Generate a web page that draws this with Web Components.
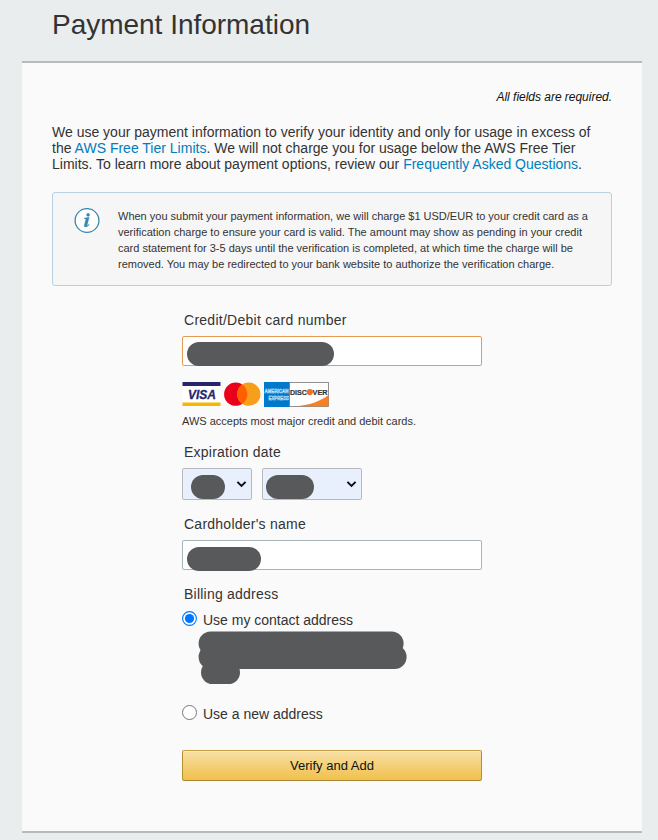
<!DOCTYPE html>
<html lang="en">
<head>
<meta charset="utf-8">
<title>Payment Information</title>
<style>
html,body{margin:0;background:#e9eded}
body{width:658px;height:840px;overflow:hidden;font-family:"Liberation Sans",Arial,sans-serif;color:#333}
</style>
</head>
<body>
<payment-page></payment-page>
<script>
const define = (name, html, setup) => customElements.define(name, class extends HTMLElement {
  connectedCallback() {
    if (this.shadowRoot) return;
    const t = document.createElement('template');
    t.innerHTML = html;
    this.attachShadow({mode: 'open'}).append(t.content.cloneNode(true));
    if (setup) setup(this, this.shadowRoot);
  }
});

// A single line of text whose tracking is adjusted to fill the width in "w".
define('text-line', `<style>
:host{display:block;white-space:nowrap}
span{display:inline-block}
::slotted(a){color:#007dbc;text-decoration:none}
</style><span><slot></slot></span>`, (host, root) => {
  const s = root.querySelector('span'), w = +host.getAttribute('w');
  const n = host.textContent.length;
  if (w) s.style.letterSpacing = ((w - s.getBoundingClientRect().width) / n).toFixed(4) + 'px';
});

// Rounded grey bar that hides a private value.
define('redaction-bar', `<style>
:host{display:block;box-sizing:border-box;background:#58595b;border-radius:12px;height:24px;flex:none}
</style>`);

define('info-note', `<style>
:host{box-sizing:border-box;display:flex;height:94px;border:1px solid #b7d1e0;border-radius:3px;background:#f6f6f6;padding:15px 0 0 20.5px;font-size:11px;line-height:16px}
svg{display:block;flex:none;margin-right:18.5px}
</style>
<svg width="26" height="26" viewBox="0 0 26 26"><circle cx="13" cy="12.5" r="11.9" fill="#fff" stroke="#3b86ae" stroke-width="1.3"/><g fill="#3b86ae" stroke="#3b86ae" stroke-width=".3"><circle cx="14.1" cy="6.8" r="1.6"/><path d="M10.3 10.1L15.2 9.3L13.2 17.1C13 17.9 13.7 17.6 14.8 16.2L15.3 16.6C13.7 18.8 12.2 19.3 11.1 19C10.2 18.7 10.1 17.9 10.4 16.8L11.8 11.5C12 10.8 11.5 10.7 10.2 10.7Z"/></g></svg>
<div><slot></slot></div>`);

define('text-field', `<style>
:host{box-sizing:border-box;display:block;width:300px;height:30px;border:1px solid var(--edge,#a6b6b8);border-radius:2px;background:#fff;padding:5px 0 0 4px}
</style><slot></slot>`);

define('select-field', `<style>
:host{box-sizing:border-box;display:flex;justify-content:space-between;height:32px;border:1px solid #b6b9bd;border-radius:2px;background:#e8f0fe;padding:6px 4px 0 var(--inset,7.5px)}
svg{display:block;margin-top:5px}
</style><slot></slot><svg width="11" height="8" viewBox="0 0 11 8"><path d="M1.4 1.9L5.5 5.9L9.6 1.9" fill="none" stroke="#101010" stroke-width="2"/></svg>`);

define('radio-option', `<style>
:host{display:flex;height:20px;font-size:14px;line-height:20px;gap:6px}
svg{display:block;flex:none}
.on{display:none}
:host([checked]) .on{display:block}
:host([checked]) .off{display:none}
</style>
<svg width="15" height="17" viewBox="0 0 15 17"><g class="off"><circle cx="7.5" cy="8.5" r="7" fill="#fff" stroke="#767676"/></g><g class="on"><circle cx="7.5" cy="8.5" r="6.9" fill="#fff" stroke="#0075ff" stroke-width="1.1"/><circle cx="7.5" cy="8.5" r="4.6" fill="#0075ff"/></g></svg><slot></slot>`);

define('card-brands', `<style>
:host{display:block;height:27px}svg{display:block}
text{font-family:"Liberation Sans",Arial,sans-serif;font-weight:bold}
</style>
<svg width="150" height="27" viewBox="0 0 150 27">
<rect x=".5" y="1" width="38" height="24" fill="#fff"/><rect x=".5" y="1" width="38" height="4" fill="#24266f"/><rect x=".5" y="21.5" width="38" height="3.5" fill="#f7b600"/>
<text x="6" y="17.8" font-size="13" font-style="italic" fill="#24266f" stroke="#24266f" stroke-width=".3" textLength="28" lengthAdjust="spacingAndGlyphs">VISA</text>
<circle cx="53.7" cy="13.2" r="11.6" fill="#eb001b"/><circle cx="66.8" cy="13.2" r="11.6" fill="#f79e1b"/>
<path d="M60.25 3.6A11.6 11.6 0 0 1 60.25 22.8A11.6 11.6 0 0 1 60.25 3.6Z" fill="#ff5f00"/>
<rect x="82" y="1" width="26" height="25" fill="#0079cd"/>
<g font-size="5.2" fill="#3c95d8" stroke="#d6ecfc" stroke-width=".4"><text x="82.5" y="12.4" textLength="24" lengthAdjust="spacingAndGlyphs">AMERICAN</text><text x="86.5" y="18.8" textLength="20.5" lengthAdjust="spacingAndGlyphs">EXPRESS</text></g>
<rect x="107.5" y="1.5" width="39" height="24" fill="#fff" stroke="#777" stroke-width=".8"/>
<path d="M115 25.2C128 24 139 20 146.5 14V25.2Z" fill="#f58025"/>
<g font-size="8" fill="#333" stroke="#333" stroke-width=".2"><text x="107.9" y="13.9" textLength="17" lengthAdjust="spacingAndGlyphs">DISC</text><text x="130.6" y="13.9" textLength="15" lengthAdjust="spacingAndGlyphs">VER</text></g><circle cx="127.8" cy="11.1" r="3.1" fill="#f36f21"/>
</svg>`);

define('primary-button', `<style>
:host{box-sizing:border-box;display:flex;align-items:center;justify-content:center;width:300px;height:31px;border:1px solid;border-color:#c6a040 #b5902f #a88734;border-radius:2px;background:linear-gradient(#f7dfa5,#f0c14b);box-shadow:inset 0 1px 0 #fae8bd;color:#111;font-size:13px}
</style><slot></slot>`);

define('payment-page', `<style>
:host{display:block;height:840px}
h1{margin:0 0 0 52px;font-size:28px;font-weight:400;line-height:50px;height:61px}
main{box-sizing:border-box;margin:0 16px 0 22px;height:772px;background:#fafafa;border:solid #bababa;border-width:2px 0;padding:26px 30px 0}
.req{display:flex;justify-content:flex-end;height:35px;font-size:12px;font-style:italic;line-height:16px;color:#111}
.intro{font-size:14px;line-height:16px;height:68px}
.form{width:300px;margin:24px auto 0;display:flex;flex-direction:column}
.label{font-size:14px;line-height:20px;padding-left:2px;height:26px}
.row{display:flex;gap:10px}
.address{display:block;height:54px;margin-left:16px}
</style>
<h1><text-line w="258">Payment Information</text-line></h1>
<main>
<div class="req"><text-line w="115.5">All fields are required.</text-line></div>
<div class="intro">
<text-line w="538.5">We use your payment information to verify your identity and only for usage in excess of</text-line>
<text-line w="523.5">the <a>AWS Free Tier Limits</a>. We will not charge you for usage below the AWS Free Tier</text-line>
<text-line w="530">Limits. To learn more about payment options, review our <a>Frequently Asked Questions</a>.</text-line>
</div>
<info-note>
<text-line w="470">When you submit your payment information, we will charge $1 USD/EUR to your credit card as a</text-line>
<text-line w="464">verification charge to ensure your card is valid. The amount may show as pending in your credit</text-line>
<text-line w="455">card statement for 3-5 days until the verification is completed, at which time the charge will be</text-line>
<text-line w="436.3">removed. You may be redirected to your bank website to authorize the verification charge.</text-line>
</info-note>
<div class="form">
<div class="label"><text-line w="162.8">Credit/Debit card number</text-line></div>
<text-field style="--edge:#e69b50"><redaction-bar style="width:147px"></redaction-bar></text-field>
<card-brands style="margin-top:15px"></card-brands>
<text-line w="234" style="font-size:11px;line-height:16px;margin:5px 0 13px">AWS accepts most major credit and debit cards.</text-line>
<div class="label"><text-line w="97">Expiration date</text-line></div>
<div class="row"><select-field style="width:70px"><redaction-bar style="width:34px"></redaction-bar></select-field><select-field style="width:100px;--inset:3px"><redaction-bar style="width:48px"></redaction-bar></select-field></div>
<div class="label" style="margin-top:14px"><text-line w="122">Cardholder's name</text-line></div>
<text-field><redaction-bar style="width:74px;margin-top:1px"></redaction-bar></text-field>
<div class="label" style="margin-top:14px"><text-line w="94.5">Billing address</text-line></div>
<radio-option checked><text-line w="150">Use my contact address</text-line></radio-option>
<svg class="address" width="210" height="54" viewBox="0 0 210 54" fill="#58595b"><rect x=".6" y="1.6" width="205" height="24" rx="12"/><rect x=".6" y="15" width="208" height="24" rx="12"/><rect x="3" y="31" width="39" height="23" rx="11.5"/></svg>
<radio-option style="margin-top:20px"><text-line w="119.7">Use a new address</text-line></radio-option>
<primary-button style="margin-top:26px"><text-line w="84">Verify and Add</text-line></primary-button>
</div>
</main>`);
</script>
</body>
</html>
